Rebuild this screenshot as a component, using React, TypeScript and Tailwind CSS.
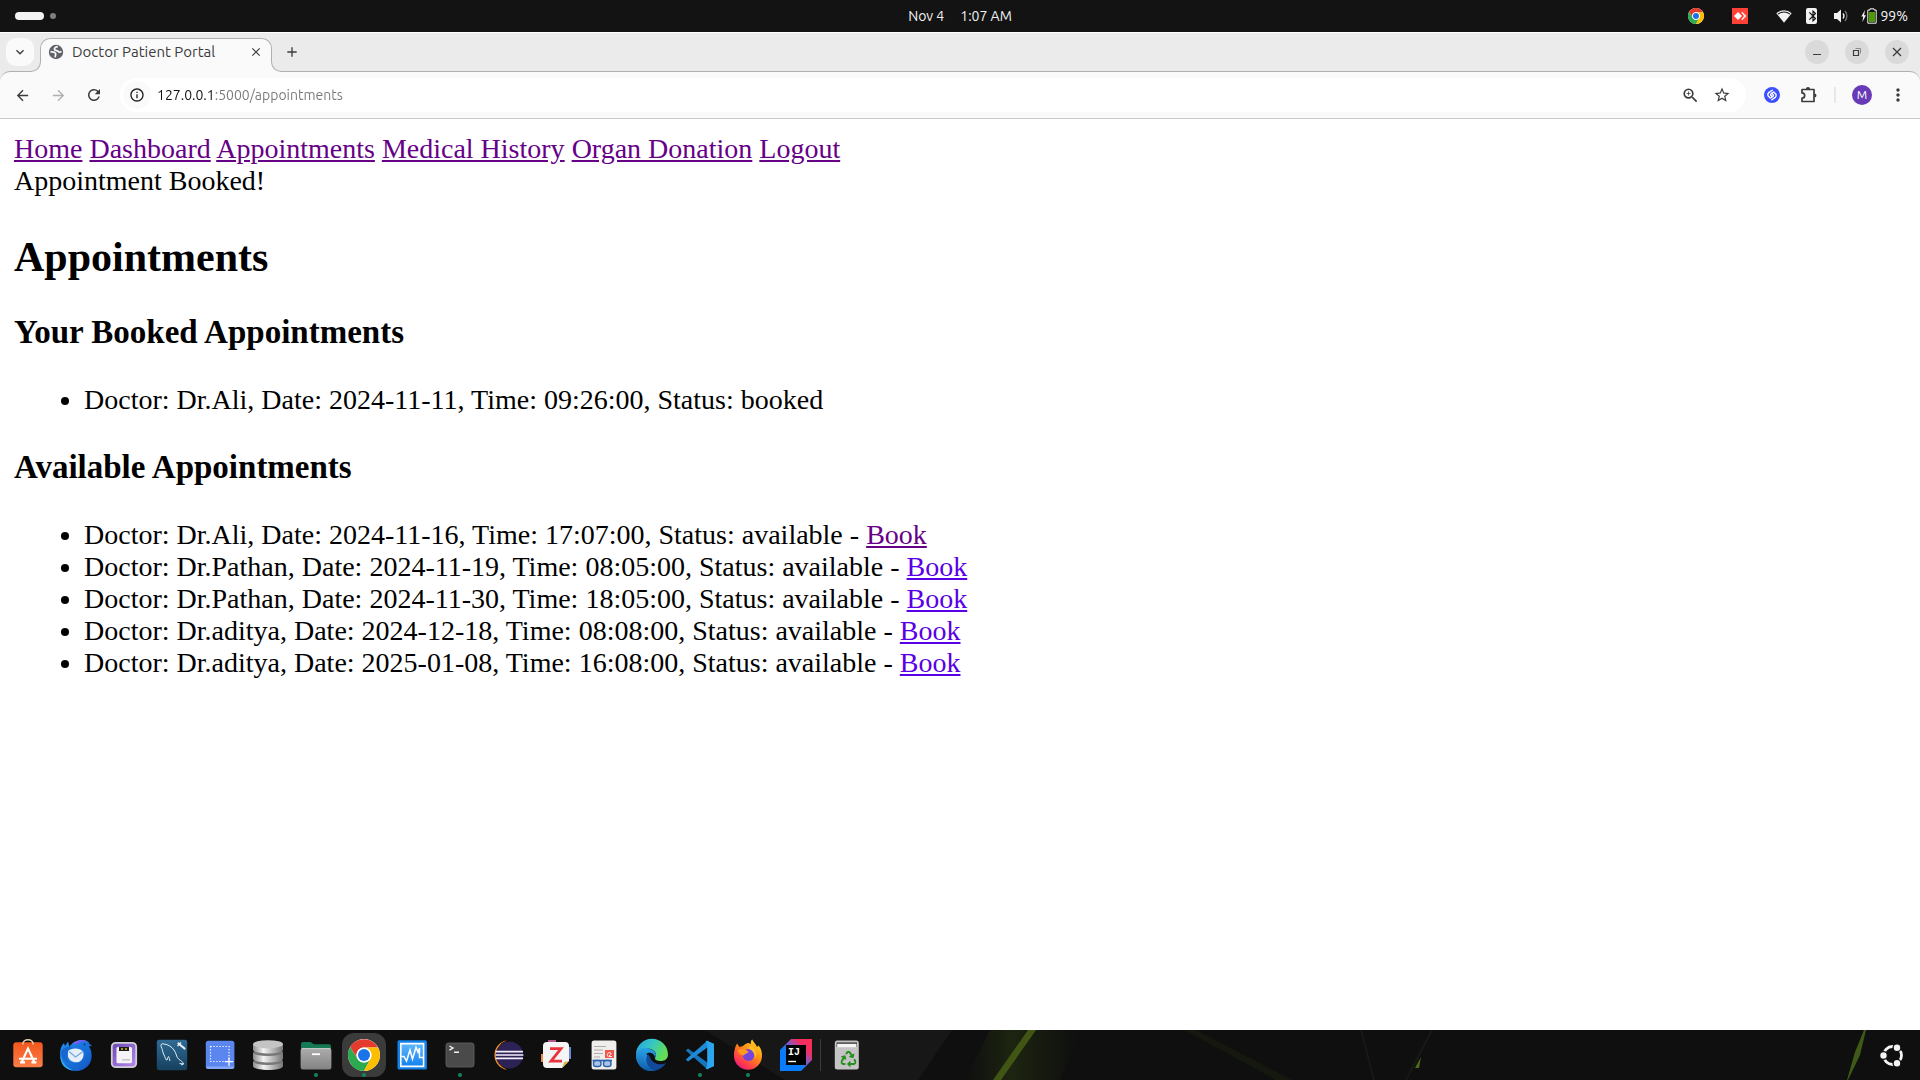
import React from "react";
import { FaRecycle } from "react-icons/fa";
import {
  MdAdd,
  MdArrowBack,
  MdArrowForward,
  MdBluetooth,
  MdClose,
  MdInfoOutline,
  MdKeyboardArrowDown,
  MdMoreVert,
  MdOutlineZoomIn,
  MdRefresh,
  MdStarBorder,
} from "react-icons/md";

type Slot = { doctor: string; date: string; time: string; visited?: boolean };

const NAV = ["Home", "Dashboard", "Appointments", "Medical History", "Organ Donation", "Logout"];

const BOOKED: Slot[] = [{ doctor: "Dr.Ali", date: "2024-11-11", time: "09:26:00" }];

const AVAILABLE: Slot[] = [
  { doctor: "Dr.Ali", date: "2024-11-16", time: "17:07:00", visited: true },
  { doctor: "Dr.Pathan", date: "2024-11-19", time: "08:05:00" },
  { doctor: "Dr.Pathan", date: "2024-11-30", time: "18:05:00" },
  { doctor: "Dr.aditya", date: "2024-12-18", time: "08:08:00" },
  { doctor: "Dr.aditya", date: "2025-01-08", time: "16:08:00" },
];

/* ---------- shared drawings ---------- */

function ChromeMark({ x = 0, y = 0, r = 16 }: { x?: number; y?: number; r?: number }) {
  return (
    <g transform={`translate(${x} ${y}) scale(${r / 16})`}>
      <circle r="16" fill="#fff" />
      <path d="M0-7.5H13.9A16 16 0 0 0-13.86-8L-6.5 3.75A7.5 7.5 0 0 1 0-7.5Z" fill="#e33b2e" />
      <path d="M-6.5 3.75-13.86-8A16 16 0 0 0 0 16L6.5 3.75A7.5 7.5 0 0 1-6.5 3.75Z" fill="#2da94f" />
      <path d="M6.5 3.75 0 16A16 16 0 0 0 14.1-7.5H0A7.5 7.5 0 0 1 6.5 3.75Z" fill="#fdbd00" />
      <circle r="7.5" fill="#fff" />
      <circle r="6" fill="#1a73e8" />
    </g>
  );
}

/* ---------- system bar ---------- */

function TopBar() {
  return (
    <header className="grid h-8 shrink-0 grid-cols-[1fr_auto_1fr] items-center bg-[#131313] text-sm text-[#f2f2f2]">
      <button aria-label="Workspaces" className="flex items-center gap-1.5 justify-self-start pl-[15px]">
        <span className="h-2 w-[29px] rounded-full bg-[#f2f2f2]" />
        <span className="size-1.5 rounded-full bg-[#808080]" />
      </button>
      <button className="flex gap-4 leading-none">
        <span>Nov 4</span>
        <span>1:07 AM</span>
      </button>
      <div className="flex items-center justify-self-end pr-3">
        <button aria-label="Chrome" className="mr-7">
          <svg className="size-4" viewBox="0 0 16 16">
            <ChromeMark x={8} y={8} r={8} />
          </svg>
        </button>
        <button aria-label="AnyDesk" className="mr-7">
          <svg className="size-4" viewBox="0 0 16 16">
            <path d="M0 0H16V16H0Z" fill="#ff4136" />
            <path d="M6 4 10 8 6 12 2 8Z" fill="#fff" />
            <path d="M9.2 4.2 10.4 4 14.4 8 10.4 12 9.2 11.7 12 8Z" fill="#fff" />
          </svg>
        </button>
        <button aria-label="System menu" className="flex items-center">
          <svg className="mr-[14px] size-4" viewBox="0 0 16 16">
            <path d="M.3 5.2A11.5 11.5 0 0 1 15.7 5.2L8 14.8Z" fill="#f2f2f2" />
            <path d="M2 6.1A9.5 9.5 0 0 1 14 6.1" fill="none" stroke="#131313" strokeWidth="1.1" />
          </svg>
          <span className="mr-4 grid h-4 w-[11px] place-items-center rounded-[2px] bg-[#f2f2f2] text-[#131313]">
            <MdBluetooth className="size-[14px]" />
          </span>
          <svg className="mr-3 size-4" viewBox="0 0 16 16">
            <path d="M1 5H4L8 1.5V14.5L4 11H1Z" fill="#f2f2f2" />
            <path d="M10 5.5A4 4 0 0 1 10 10.5" fill="none" stroke="#f2f2f2" strokeWidth="1.3" />
            <path d="M12 3A7.5 7.5 0 0 1 12 13" fill="none" stroke="#777" strokeWidth="1.3" />
          </svg>
          <svg className="mr-[3px] size-4" viewBox="0 0 16 16">
            <path d="M4 2 .3 8.6H2.2L1.4 14 5 7.2H3.1Z" fill="#f2f2f2" />
            <path d="M6.8 2H9V.8H13V2H15.2V15.2H6.8Z" fill="none" stroke="#f2f2f2" strokeWidth="1" />
            <path d="M8 4H14V14H8Z" fill="#4e9a06" />
          </svg>
          <span>99%</span>
        </button>
      </div>
    </header>
  );
}

/* ---------- browser ---------- */

function TabStrip() {
  return (
    <div className="flex h-[39px] shrink-0 items-start border-t border-white bg-[#ebebeb] text-[#3c3c3c]">
      <button aria-label="Search tabs" className="mt-[5px] ml-1.5 grid size-7 place-items-center rounded-[10px] bg-[#fafafa]">
        <MdKeyboardArrowDown className="size-4" />
      </button>
      <div className="relative z-10 mt-[5px] ml-1.5 flex h-[34px] w-[232px] items-center rounded-t-[10px] border border-b-0 border-[#b0b0b0] bg-[#fafafa] pb-2">
        <span className="absolute bottom-0 -left-[10px] size-[10px] bg-[#fafafa]">
          <span className="block size-[10px] rounded-br-[10px] border-r border-b border-[#b0b0b0] bg-[#ebebeb]" />
        </span>
        <span className="absolute -right-[10px] bottom-0 size-[10px] bg-[#fafafa]">
          <span className="block size-[10px] rounded-bl-[10px] border-b border-l border-[#b0b0b0] bg-[#ebebeb]" />
        </span>
        <svg className="ml-[7px] size-4" viewBox="0 0 16 16" aria-hidden="true">
          <circle cx="8" cy="8" r="7.2" fill="#5f6368" />
          <path
            d="M9.8 2.6C7.4 3 6 4.2 6.6 5.6 7.2 7 9.6 6.4 10.4 7.6 11 8.6 12.4 8.2 13.4 7.4M2.4 8C4.4 7.6 6.6 8 7.6 9.4 8.4 10.6 6.6 11.6 7.4 13.4"
            fill="none"
            stroke="#fafafa"
            strokeWidth="1.7"
          />
        </svg>
        <span className="ml-2 flex-1 text-[15px] leading-5 whitespace-nowrap">Doctor Patient Portal</span>
        <button aria-label="Close tab" className="mr-2">
          <MdClose className="size-[14px]" />
        </button>
      </div>
      <button aria-label="New tab" className="mt-[11px] ml-3">
        <MdAdd className="size-4" />
      </button>
      <div className="mt-[7px] mr-[11px] ml-auto flex gap-4">
        <button aria-label="Minimize" className="grid size-6 place-items-center rounded-full bg-[#dadada]">
          <svg className="size-3" viewBox="0 0 12 12">
            <path d="M2 8.5H10" stroke="#3c3c3c" strokeWidth="1" />
          </svg>
        </button>
        <button aria-label="Restore" className="grid size-6 place-items-center rounded-full bg-[#dadada]">
          <svg className="size-3" viewBox="0 0 12 12" fill="none" stroke="#3c3c3c">
            <path d="M2.5 4.5H7.5V9.5H2.5Z" strokeWidth="1.2" />
            <path d="M4.5 2.5H9.5V7.5" stroke="#8a8a8a" />
          </svg>
        </button>
        <button aria-label="Close window" className="grid size-6 place-items-center rounded-full bg-[#dadada]">
          <svg className="size-3" viewBox="0 0 12 12">
            <path d="M2 2 10 10M10 2 2 10" stroke="#3c3c3c" strokeWidth="1.3" />
          </svg>
        </button>
      </div>
    </div>
  );
}

function Toolbar() {
  return (
    <div className="shrink-0 bg-[#ebebeb]">
      <div className="flex h-12 items-center rounded-t-[10px] border-t border-b border-t-[#b0b0b0] border-b-[#c9c9c9] bg-[#fafafa] px-1 text-[#3c3c3c]">
        <button aria-label="Back" className="grid size-9 place-items-center">
          <MdArrowBack className="size-[17px]" />
        </button>
        <button aria-label="Forward" className="grid size-9 place-items-center text-[#b0b0b0]">
          <MdArrowForward className="size-[17px]" />
        </button>
        <button aria-label="Reload" className="grid size-9 place-items-center">
          <MdRefresh className="size-[18px]" />
        </button>
        <form className="ml-2 flex h-[34px] flex-1 items-center rounded-full bg-white pr-2 pl-[3px]">
          <button type="button" aria-label="Site information" className="grid size-7 place-items-center rounded-full bg-[#fafafa] text-[#1f1f1f]">
            <MdInfoOutline className="size-4" />
          </button>
          <input
            aria-label="Address"
            defaultValue="127.0.0.1:5000/appointments"
            className="ml-1.5 min-w-0 flex-1 bg-linear-to-r from-[#111111] from-[56px] to-[#777777] to-[56px] bg-clip-text text-sm leading-5 text-transparent outline-none"
          />
          <button type="button" aria-label="Zoom" className="grid size-8 place-items-center">
            <MdOutlineZoomIn className="size-[19px]" />
          </button>
          <button type="button" aria-label="Bookmark" className="grid size-8 place-items-center">
            <MdStarBorder className="size-[18px]" />
          </button>
        </form>
        <button aria-label="Shazam" className="ml-2 grid size-9 place-items-center">
          <svg className="size-4" viewBox="0 0 16 16">
            <circle cx="8" cy="8" r="8" fill="#3d4eff" />
            <g fill="none" stroke="#fff" strokeWidth="1.4" strokeLinecap="round">
              <path d="M5.4 10.2C3.4 9 3.4 6.8 4.8 5.6L8.2 3.2" />
              <path d="M10.6 5.8C12.6 7 12.6 9.2 11.2 10.4L7.8 12.8" />
              <path d="M9.8 4.9 7 6.8C6.2 7.5 6.6 8.4 7.6 9" />
              <path d="M6.2 11.1 9 9.2C9.8 8.5 9.4 7.6 8.4 7" />
            </g>
          </svg>
        </button>
        <button aria-label="Extensions" className="grid size-9 place-items-center">
          <svg className="size-[18px]" viewBox="0 0 18 18">
            <path
              d="M3 3.5H15V15.5H3V12.2A2.6 2.6 0 0 0 3 6.9Z"
              fill="none"
              stroke="#3c3c3c"
              strokeWidth="1.7"
              strokeLinejoin="round"
            />
            <path d="M6.9 3A2.1 2.1 0 0 1 11.1 3ZM15.4 7.4A2.1 2.1 0 0 1 15.4 11.6Z" fill="#3c3c3c" />
          </svg>
        </button>
        <span className="mx-2 h-4 w-[2px] bg-[#e8e8e8]" />
        <button aria-label="Profile" className="grid size-9 place-items-center">
          <span className="grid size-5 place-items-center rounded-full bg-[#673ab7] text-xs leading-none text-white">M</span>
        </button>
        <button aria-label="Menu" className="grid size-9 place-items-center">
          <MdMoreVert className="size-5" />
        </button>
      </div>
    </div>
  );
}

function PageContent() {
  return (
    <main className="flex-1 bg-white p-[14px] font-['Liberation_Serif','Times_New_Roman',serif] text-[28px] leading-8 text-black">
      <nav>
        {NAV.map((label) => (
          <React.Fragment key={label}>
            <a href="#" className="text-[#660087] underline">
              {label}
            </a>{" "}
          </React.Fragment>
        ))}
      </nav>
      <p>Appointment Booked!</p>
      <h2 className="mt-9 text-[42px] leading-[48px] font-bold">Appointments</h2>
      <h3 className="my-[33px] text-[33px] leading-[37px] font-bold">Your Booked Appointments</h3>
      <ul className="list-disc pl-[70px]">
        {BOOKED.map((s) => (
          <li key={s.date}>
            Doctor: {s.doctor}, Date: {s.date}, Time: {s.time}, Status: booked
          </li>
        ))}
      </ul>
      <h3 className="my-[33px] text-[33px] leading-[37px] font-bold">Available Appointments</h3>
      <ul className="list-disc pl-[70px]">
        {AVAILABLE.map((s) => (
          <li key={s.date}>
            Doctor: {s.doctor}, Date: {s.date}, Time: {s.time}, Status: available -{" "}
            <a href="#" className={s.visited ? "text-[#660087] underline" : "text-[#5a00e6] underline"}>
              Book
            </a>
          </li>
        ))}
      </ul>
    </main>
  );
}

/* ---------- dock ---------- */

type DockApp = { name: string; running?: boolean; active?: boolean; art: React.ReactNode };

const APPS: DockApp[] = [
  {
    name: "App Center",
    art: (
      <>
        <defs>
          <linearGradient id="ac" x1="0" y1="0" x2="0" y2="1">
            <stop offset="0" stopColor="#f2571c" />
            <stop offset="1" stopColor="#fb7f4a" />
          </linearGradient>
        </defs>
        <rect x="9.3" y="12.3" width="29.4" height="24.9" rx="3" fill="url(#ac)" />
        <path d="M18.8 14.5C18.8 8 29.2 8 29.2 14.5" fill="none" stroke="#e8d2ae" strokeWidth="1.5" />
        <path d="M18 31.5 24 18.5 30 31.5M15 28.8H33M16 32.4H21M27.5 32.4H32.4" fill="none" stroke="#fff" strokeWidth="2.1" />
      </>
    ),
  },
  {
    name: "Thunderbird",
    art: (
      <>
        <defs>
          <linearGradient id="tb" x1="0" y1="0" x2="1" y2="1">
            <stop offset="0" stopColor="#1f8ff0" />
            <stop offset="1" stopColor="#1155c4" />
          </linearGradient>
        </defs>
        <path d="M8 24C8 20 9 15.5 12 13L13 16 16 11.5C17 14 17 15.5 17.5 17 20 12 25 9.8 31 10 35 10.3 37 12 37.5 14L40 15.5 37 16.5C39.2 19.5 40 23 39.5 28 38.5 35.5 32 41 24.5 41 15 41 8 34 8 24Z" fill="url(#tb)" />
        <path d="M20 13.5C25 9.8 31 9 35 11.2 31 11 27 12 24.5 14.5Z" fill="#7a5af0" />
        <path d="M8.5 25C10 33 15 37.5 21 40.5 12 39.5 8 33 8.5 25Z" fill="#35a8f2" />
        <path d="M9 22C11 17 17 16 21 18 15 20 12.5 27 17 33 12 31 9 27 9 22Z" fill="#1767cf" />
        <path d="M16 21C19 17.5 28 17.5 31 21.5 32.5 25 31 30 27 32 21 33.5 16.5 30 16 26Z" fill="#e6eff9" />
        <path d="M17 21.5 23.5 27 31 21.5" fill="none" stroke="#6fa8dd" strokeWidth="1.3" />
        <circle cx="32.5" cy="14.3" r=".9" fill="#08306b" />
      </>
    ),
  },
  {
    name: "Disk Utility",
    art: (
      <>
        <defs>
          <linearGradient id="du" x1="0" y1="0" x2="1" y2="1">
            <stop offset="0" stopColor="#6a48b0" />
            <stop offset="1" stopColor="#b88af0" />
          </linearGradient>
        </defs>
        <rect x="11.8" y="12.8" width="24.4" height="24.4" rx="4" fill="url(#du)" stroke="#cfcfd6" strokeWidth="1.8" />
        <rect x="16.5" y="17" width="15.5" height="16.2" rx="1.5" fill="#f4f4f6" />
        <path d="M19 17H29V21H19Z" fill="#1b1b1b" />
        <path d="M21 19H23M25 19H27" stroke="#d8c100" strokeWidth="1.6" />
        <path d="M22 29.8H30" stroke="#c6c6cc" strokeWidth="1.6" />
      </>
    ),
  },
  {
    name: "MySQL Workbench",
    art: (
      <>
        <defs>
          <linearGradient id="my" x1="0" y1="0" x2="0" y2="1">
            <stop offset="0" stopColor="#2f6b95" />
            <stop offset="1" stopColor="#16405e" />
          </linearGradient>
        </defs>
        <rect x="8.8" y="9.8" width="30.4" height="30.4" rx="2.5" fill="url(#my)" />
        <path
          d="M19 30C17 30 17.5 27 16 25 14.5 22 14.5 19 13.2 16.8 12.2 14.5 14 13 16 14 20 14.4 24 17 26 20 28.5 23 28 27 31 29.5 33 30.8 34.5 31.5 35.5 34L31.5 33.5M19 30C19.5 28.5 20 27 20.5 26.5 21.5 28 21.5 29.5 22 31M35.5 34 33 35"
          fill="none"
          stroke="#e3edf4"
          strokeWidth="1"
        />
        <path d="M30.5 13.5 36.5 18.5" stroke="#e8eef2" strokeWidth="2.2" strokeLinecap="round" />
        <path d="M29.5 16 33 12.5" stroke="#e8eef2" strokeWidth="1.2" />
      </>
    ),
  },
  {
    name: "Screenshot",
    art: (
      <>
        <rect x="9.8" y="10.8" width="28.6" height="28.2" rx="2.5" fill="#5b86ef" />
        <path d="M10 36.5H38.4A2.5 2.5 0 0 1 36 39H12A2.5 2.5 0 0 1 10 36.5Z" fill="#86a8f8" />
        <path d="M14.5 16.5H33V31.5H14.5Z" fill="none" stroke="#fff" strokeWidth="1.2" strokeDasharray="1.2 1.8" />
        <path d="M33 27.5V36M28.8 31.7H37.2" stroke="#fff" strokeWidth="1.2" />
      </>
    ),
  },
  {
    name: "Database",
    art: (
      <>
        <defs>
          <linearGradient id="db" x1="0" y1="0" x2="1" y2="0">
            <stop offset="0" stopColor="#8f8f8f" />
            <stop offset=".35" stopColor="#f2f2f2" />
            <stop offset="1" stopColor="#777" />
          </linearGradient>
        </defs>
        <path d="M9 32V36C9 41.3 39 41.3 39 36V32Z" fill="url(#db)" />
        <ellipse cx="24" cy="31.5" rx="15" ry="3.4" fill="#777" />
        <path d="M9 23V28.5C9 33.8 39 33.8 39 28.5V23Z" fill="url(#db)" />
        <ellipse cx="24" cy="22.5" rx="15" ry="3.4" fill="#777" />
        <path d="M9 14V19.5C9 24.8 39 24.8 39 19.5V14Z" fill="url(#db)" />
        <ellipse cx="24" cy="14.2" rx="15" ry="4" fill="#c4c4c4" />
      </>
    ),
  },
  {
    name: "Files",
    running: true,
    art: (
      <>
        <defs>
          <linearGradient id="fi" x1="0" y1="0" x2="0" y2="1">
            <stop offset="0" stopColor="#acacac" />
            <stop offset="1" stopColor="#838383" />
          </linearGradient>
        </defs>
        <path d="M9 14A2 2 0 0 1 11 12H18.5L22 14.2H37A2 2 0 0 1 39 16.2V25H9Z" fill="#157a53" />
        <rect x="8.6" y="18.2" width="30.8" height="21.2" rx="2.5" fill="url(#fi)" />
        <path d="M9.5 18.6H38.5" stroke="#d5d5d5" strokeWidth=".8" />
        <path d="M20 24.2H28" stroke="#fff" strokeWidth="1.8" />
      </>
    ),
  },
  { name: "Google Chrome", running: true, active: true, art: <ChromeMark x={24} y={25} r={16} /> },
  {
    name: "System Monitor",
    art: (
      <>
        <defs>
          <linearGradient id="vm" x1="0" y1="0" x2="0" y2="1">
            <stop offset="0" stopColor="#5fb8ff" />
            <stop offset="1" stopColor="#1182ee" />
          </linearGradient>
        </defs>
        <rect x="9.5" y="10.2" width="29.4" height="29.4" rx="1.5" fill="#1382e8" />
        <path d="M12.8 13.6H35.6V36.4H12.8Z" fill="url(#vm)" stroke="#fff" strokeWidth="1.6" />
        <path d="M13.5 26.5H16L18.5 31 22 20 24.5 29 28 17.5 30 22 31.5 18V27.5H35" fill="none" stroke="#fff" strokeWidth="1.5" />
      </>
    ),
  },
  {
    name: "Terminal",
    running: true,
    art: (
      <>
        <rect x="10" y="13" width="28" height="24" rx="2.5" fill="#4a4a4a" stroke="#666" strokeWidth=".8" />
        <path d="M13.4 16 17 18 13.4 20.2M18 22.2H23" fill="none" stroke="#f2f2f2" strokeWidth="1.4" />
      </>
    ),
  },
  {
    name: "Eclipse",
    art: (
      <>
        <path d="M23 10.2A15 15 0 0 0 23 39.8 17.5 17.5 0 0 1 11.5 25 17.5 17.5 0 0 1 23 10.2Z" fill="#f7941e" />
        <circle cx="25.5" cy="25" r="13.6" fill="#2c2255" />
        <path d="M11.6 21.6H39M11.4 25H39.4M11.6 28.4H39" stroke="#f3eefa" strokeWidth="1.6" />
      </>
    ),
  },
  {
    name: "Zotero",
    art: (
      <>
        <path d="M16 10H24V14H16Z" fill="#b05a8c" />
        <path d="M34 17H39V29H34Z" fill="#6f86d6" />
        <path d="M9 24H14V32H9Z" fill="#f08a4b" />
        <path d="M15 12H33A4 4 0 0 1 37 16V31L30 38H15A4 4 0 0 1 11 34V16A4 4 0 0 1 15 12Z" fill="#f5f5f5" />
        <path d="M30 38 37 31 32 32Z" fill="#dfb944" />
        <path d="M18 18.6H29L19 31.2H30" fill="none" stroke="#e8343f" strokeWidth="2.8" />
      </>
    ),
  },
  {
    name: "Document Viewer",
    art: (
      <>
        <rect x="11.6" y="10.4" width="24.8" height="29" rx="2.5" fill="#f0eeec" />
        <path d="M14 16.5H26M14 20H23M14 23.5H23M14 27H20" stroke="#b0aba4" strokeWidth="1.2" />
        <path d="M25 20H34V28H25Z" fill="#f0564c" />
        <path d="M28 26.5C26 24 29 21.5 31 23 32 25 28 25.5 29 26.5H32" fill="none" stroke="#fff" strokeWidth=".9" />
        <path d="M12.5 30.5H32" stroke="#2c62b0" strokeWidth="1.6" />
        <rect x="13.5" y="30.5" width="7.5" height="6" rx="2.6" fill="#a9c4e4" stroke="#2c62b0" strokeWidth="1.4" />
        <rect x="23.5" y="30.5" width="7.5" height="6" rx="2.6" fill="#a9c4e4" stroke="#2c62b0" strokeWidth="1.4" />
      </>
    ),
  },
  {
    name: "Microsoft Edge",
    art: (
      <>
        <defs>
          <linearGradient id="e1" x1="0" y1="0" x2="1" y2=".4">
            <stop offset="0" stopColor="#2a9fe0" />
            <stop offset=".5" stopColor="#34c6c6" />
            <stop offset="1" stopColor="#63dd55" />
          </linearGradient>
          <linearGradient id="e2" x1="0" y1="0" x2="0" y2="1">
            <stop offset="0" stopColor="#2aa4e8" />
            <stop offset="1" stopColor="#0f5ba8" />
          </linearGradient>
        </defs>
        <path d="M8 25A16 16 0 0 0 27 40.7C21 38 18 32 20.5 26.5 17 22 10 20 8 25Z" fill="url(#e2)" />
        <path d="M20 24C16 30 19 38 27 40.7 32 39.5 36 36.5 38 33 33 36 24 34 22 27Z" fill="#12499a" />
        <path d="M8 25A16 16 0 0 1 40 24.5C40 29 36.5 31 33 31 29.5 31 26.5 30 27 28 29.5 24 27 20 21.5 18.8 15 17.5 9 20 8 25Z" fill="url(#e1)" />
        <path d="M8 25C8.5 20 14 16 20.5 18.5 27 20.5 29.5 24 27 28 27 25 24 22 20 23 17 24 15 29 17.5 34 19 37.5 23 40.5 27 40.7 15 43 7.5 34 8 25Z" fill="url(#e2)" />
      </>
    ),
  },
  {
    name: "Visual Studio Code",
    running: true,
    art: (
      <>
        <path d="M9.8 20.5 12 18.6 32 33 32.5 39.2 31 39Z" fill="#1576bd" />
        <path d="M9.8 29.5 12 31.4 32 17 32.5 10.8 31 11Z" fill="#1d8bd8" />
        <path d="M31 10.8 38 13.8V36.2L31 39.2C30 39.2 29.8 38.5 29.8 38L31.2 36.5V13.5L29.8 12C29.8 11.5 30 10.8 31 10.8Z" fill="#2ba6ee" />
      </>
    ),
  },
  {
    name: "Firefox",
    running: true,
    art: (
      <>
        <defs>
          <linearGradient id="ff" x1=".9" y1="0" x2=".2" y2="1">
            <stop offset="0" stopColor="#ffe226" />
            <stop offset=".45" stopColor="#ff8a16" />
            <stop offset=".8" stopColor="#ff3750" />
            <stop offset="1" stopColor="#e0158a" />
          </linearGradient>
        </defs>
        <path d="M13 13.5 15.5 17 19 16C21 14 23 13 24.5 13L27 14C26.5 12 27 10.5 28.2 9.5 29.5 12.5 32 14 33 17L34.5 15.5C37.5 19 38 22.5 38 25.5A14 14 0 0 1 10 26C9.8 22 11 17 13 13.5Z" fill="url(#ff)" />
        <circle cx="24.5" cy="25" r="6" fill="#7544dd" />
        <path d="M14 20C17 18 21 19 24.5 21.5 24 23.8 20.5 23.5 20 25.5 17 25 14 23.5 14 20Z" fill="#ff9a1c" />
        <path d="M26 16C32 18 34 24 31 29 31 24 29 20 24 18.5Z" fill="#ffbd2e" />
      </>
    ),
  },
  {
    name: "IntelliJ IDEA",
    art: (
      <>
        <defs>
          <linearGradient id="ij" x1="1" y1="0" x2="0" y2="1">
            <stop offset="0" stopColor="#ff2d55" />
            <stop offset=".25" stopColor="#ee2f62" />
            <stop offset=".45" stopColor="#7a5bd0" />
            <stop offset=".6" stopColor="#087cfa" />
            <stop offset="1" stopColor="#087cfa" />
          </linearGradient>
        </defs>
        <path d="M19 9H40V30L29 41H8V20Z" fill="url(#ij)" />
        <path d="M14 15H34V35H14Z" fill="#000" />
        <path d="M16.2 31.5H24" stroke="#fff" strokeWidth="1.4" />
        <text x="16" y="24.5" fill="#fff" fontSize="10" fontWeight="700" fontFamily="Liberation Mono, monospace">
          IJ
        </text>
      </>
    ),
  },
];

const TRASH: DockApp = {
  name: "Trash",
  art: (
    <>
      <rect x="11.8" y="10.6" width="24" height="29" rx="2.5" fill="#c4c4c4" />
      <path d="M13.6 12.4H34V17H13.6Z" fill="#3b3b3b" />
      <path d="M14.2 13.8H33.5V17.2H14.2Z" fill="#f4f4f4" />
      <FaRecycle x="17.5" y="21" width="13" height="13" color="#26901e" />
    </>
  ),
};

function DockButton({ app }: { app: DockApp }) {
  return (
    <button aria-label={app.name} className="h-[50px] w-12 shrink-0">
      <svg className="h-[50px] w-12" viewBox="0 0 48 50">
        {app.active && <rect x="2" y="3" width="44" height="44" rx="12" fill="#3b3b3b" />}
        {app.art}
        {app.running && <circle cx="24" cy="45" r="2" fill="#15855f" />}
      </svg>
    </button>
  );
}

function Dock() {
  return (
    <footer className="relative h-[50px] shrink-0 overflow-hidden bg-[#0f0f0f]">
      <svg className="absolute inset-0 h-full w-full" viewBox="0 0 1920 50" preserveAspectRatio="none" aria-hidden="true">
        <defs>
          <linearGradient id="glow" x1="0" y1="0" x2="1" y2="0">
            <stop offset="0" stopColor="#1a2010" stopOpacity="0" />
            <stop offset=".4" stopColor="#1d2510" />
            <stop offset="1" stopColor="#1a2010" stopOpacity="0" />
          </linearGradient>
        </defs>
        <path d="M705 0H952L918 50H785Z" fill="#171717" />
        <path d="M990 0H1080L1060 50H965Z" fill="url(#glow)" />
        <path d="M1028 0H1036L1001 50H993Z" fill="#415614" />
        <path d="M1184 0H1196L1292 50H1276Z" fill="#15180e" />
        <path d="M1361 0 1374 50M1432 0 1406 50" fill="none" stroke="#171914" strokeWidth="2" />
        <path d="M1421 27 1419 38 1415 38Z" fill="#4d6b18" />
        <path d="M1864 0H1866L1860 25 1848 50H1847L1855 22Z" fill="#3f5a17" />
      </svg>
      <div className="relative flex h-full items-center pr-1 pl-1">
        {APPS.map((app) => (
          <DockButton key={app.name} app={app} />
        ))}
        <span className="mr-[2px] h-8 w-px bg-[#3c3c3c]" />
        <DockButton app={TRASH} />
        <button aria-label="Show applications" className="ml-auto h-[50px] w-12">
          <svg className="h-[50px] w-12" viewBox="0 0 48 50">
            <circle cx="24.5" cy="25.5" r="9" fill="none" stroke="#f4f4f4" strokeWidth="2.8" />
            <g stroke="#0f0f0f" strokeWidth="1.4" fill="#f4f4f4">
              <circle cx="15.5" cy="25.5" r="3.9" />
              <circle cx="29" cy="17.7" r="3.9" />
              <circle cx="29" cy="33.3" r="3.9" />
            </g>
          </svg>
        </button>
      </div>
    </footer>
  );
}

export default function App() {
  return (
    <div className="flex min-h-screen flex-col font-['Ubuntu','Noto_Sans',sans-serif]">
      <TopBar />
      <TabStrip />
      <Toolbar />
      <PageContent />
      <Dock />
    </div>
  );
}
